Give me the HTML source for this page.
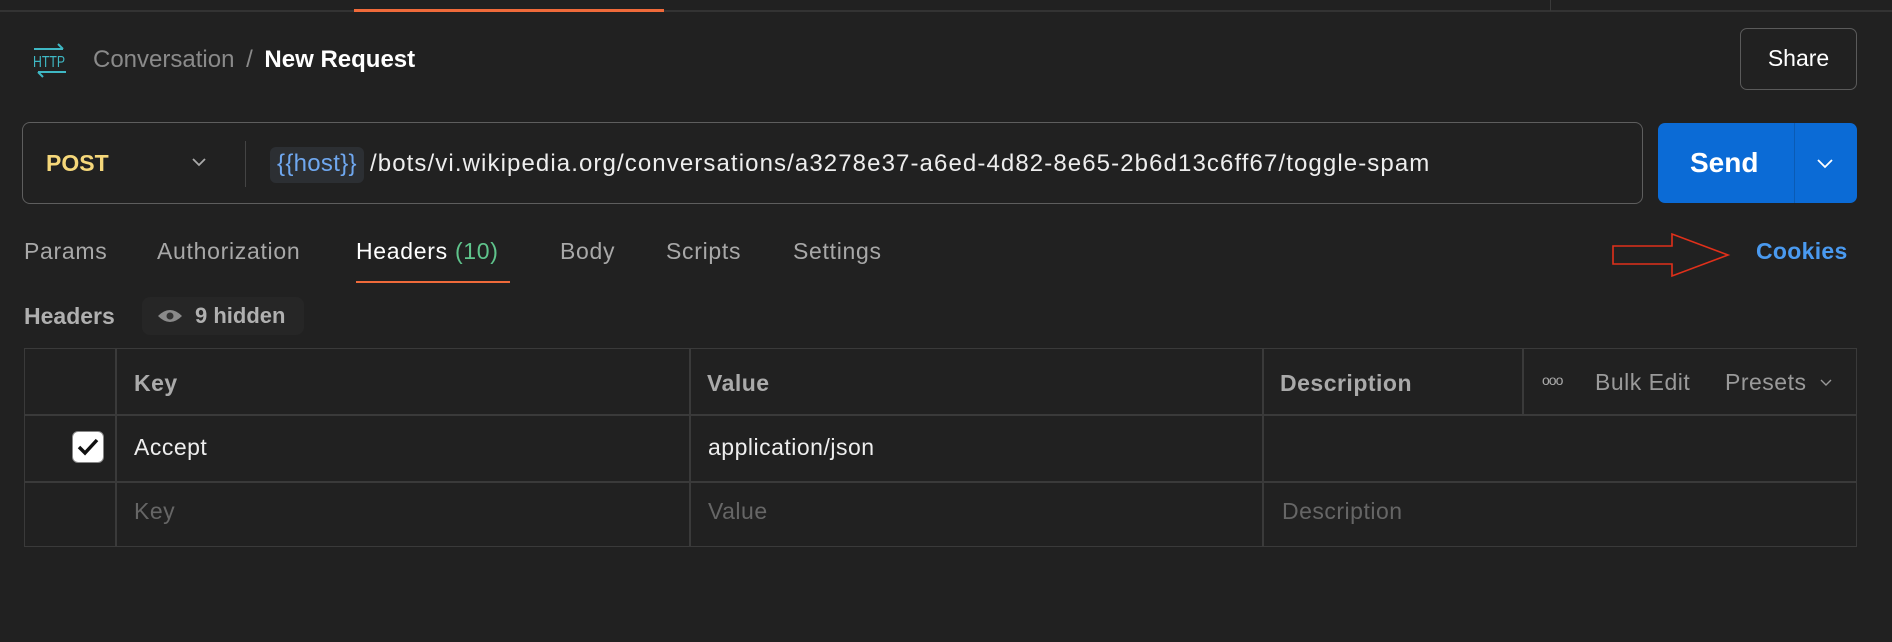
<!DOCTYPE html>
<html><head><meta charset="utf-8"><style>
*{box-sizing:border-box;margin:0;padding:0}
body{width:1892px;height:642px;background:#212121;font-family:"Liberation Sans",sans-serif;color:#e8e8e8;position:relative;overflow:hidden}
.a{position:absolute;white-space:nowrap}
.tab{position:absolute;top:238px;font-size:23px;letter-spacing:0.7px;color:#a8a8a8}
.cell{position:absolute;font-size:23px;letter-spacing:0.5px}
</style></head><body>
<div class="a" style="left:0;top:10px;width:1892px;height:2px;background:#333"></div>
<div class="a" style="left:354px;top:9px;width:310px;height:3px;background:#f06a3a"></div>
<div class="a" style="left:1550px;top:0;width:1px;height:11px;background:#3a3a3a"></div>

<svg class="a" style="left:31px;top:43px" width="38" height="36" viewBox="0 0 38 36">
<path d="M3 6 H32 M27 1 L32 6" stroke="#3fb8c4" stroke-width="2" fill="none"/>
<text x="2" y="24" font-family="Liberation Sans" font-size="16" fill="#3fb8c4" textLength="32" lengthAdjust="spacingAndGlyphs">HTTP</text>
<path d="M35 29 H7 M12 34 L7 29" stroke="#3fb8c4" stroke-width="2" fill="none"/>
</svg>
<div class="a" style="left:93px;top:46px;font-size:24px;letter-spacing:0px;color:#8a8a8a">Conversation <span style="margin:0 5px">/</span> <span style="color:#fff;font-weight:bold">New Request</span></div>

<div class="a" style="left:1740px;top:28px;width:117px;height:62px;border:1.5px solid #5a5a5a;border-radius:7px;font-size:23px;color:#fff;text-align:center;line-height:59px">Share</div>

<div class="a" style="left:22px;top:122px;width:1621px;height:82px;border:1.5px solid #5e5e5e;border-radius:8px"></div>
<div class="a" style="left:46px;top:150px;font-size:23px;font-weight:bold;color:#f5d77a">POST</div>
<svg class="a" style="left:191px;top:157px" width="16" height="10"><path d="M2 2 L8 8 L14 2" stroke="#aaa" stroke-width="1.8" fill="none"/></svg>
<div class="a" style="left:245px;top:141px;width:1px;height:46px;background:#444"></div>
<div class="a" style="left:270px;top:147px;width:94px;height:36px;background:#2c2f33;border-radius:6px"></div>
<div class="a" style="left:277px;top:150px;font-size:24px;letter-spacing:0.3px;color:#6fa7ef">{{host}}</div>
<div class="a" style="left:370px;top:150px;font-size:24px;letter-spacing:1.1px;color:#eee">/bots/vi.wikipedia.org/conversations/a3278e37-a6ed-4d82-8e65-2b6d13c6ff67/toggle-spam</div>

<div class="a" style="left:1658px;top:123px;width:199px;height:80px;background:#0b6bd6;border-radius:7px"></div>
<div class="a" style="left:1794px;top:123px;width:1px;height:80px;background:#0a5bb5"></div>
<div class="a" style="left:1690px;top:147px;font-size:28px;font-weight:bold;color:#fff">Send</div>
<svg class="a" style="left:1816px;top:158px" width="18" height="11"><path d="M2 2 L9 9 L16 2" stroke="#fff" stroke-width="1.8" fill="none"/></svg>

<div class="tab" style="left:24px">Params</div>
<div class="tab" style="left:157px">Authorization</div>
<div class="tab" style="left:356px;color:#fff">Headers <span style="color:#5fc48c">(10)</span></div>
<div class="tab" style="left:560px">Body</div>
<div class="tab" style="left:666px">Scripts</div>
<div class="tab" style="left:793px">Settings</div>
<div class="a" style="left:356px;top:281px;width:154px;height:2px;background:#f06a3a"></div>

<svg class="a" style="left:1612px;top:232px" width="120" height="46"><path d="M1 14 H60 V2 L116 23 L60 44 V32 H1 Z" stroke="#e0301a" stroke-width="1.6" fill="none"/></svg>
<div class="a" style="left:1756px;top:238px;font-size:23px;letter-spacing:0.3px;font-weight:bold;color:#4a9af0">Cookies</div>

<div class="a" style="left:24px;top:303px;font-size:23px;font-weight:bold;color:#b0b0b0">Headers</div>
<div class="a" style="left:142px;top:297px;width:162px;height:38px;background:#262626;border-radius:8px"></div>
<svg class="a" style="left:156px;top:307px" width="28" height="18"><path d="M2 9 Q14 -3 26 9 Q14 21 2 9 Z" fill="#8a8a8a"/><circle cx="14" cy="9" r="3.5" fill="#333"/></svg>
<div class="a" style="left:195px;top:303px;font-size:22px;font-weight:bold;color:#b0b0b0">9 hidden</div>

<div class="a" style="left:24px;top:348px;width:1833px;height:199px;border:1.5px solid #3a3a3a"></div>
<div class="a" style="left:24px;top:414px;width:1833px;height:1.5px;background:#3a3a3a"></div>
<div class="a" style="left:24px;top:481px;width:1833px;height:1.5px;background:#3a3a3a"></div>
<div class="a" style="left:115px;top:348px;width:1.5px;height:199px;background:#3a3a3a"></div>
<div class="a" style="left:689px;top:348px;width:1.5px;height:199px;background:#3a3a3a"></div>
<div class="a" style="left:1262px;top:348px;width:1.5px;height:199px;background:#3a3a3a"></div>
<div class="a" style="left:1522px;top:348px;width:1.5px;height:66px;background:#3a3a3a"></div>

<div class="cell a" style="left:134px;top:370px;font-weight:bold;color:#aaa">Key</div>
<div class="cell a" style="left:707px;top:370px;font-weight:bold;color:#aaa">Value</div>
<div class="cell a" style="left:1280px;top:370px;font-weight:bold;color:#aaa">Description</div>
<div class="a" style="left:1542px;top:372px;font-size:14px;color:#aaa;letter-spacing:-1px">ooo</div>
<div class="cell a" style="left:1595px;top:369px;color:#9a9a9a">Bulk Edit</div>
<div class="cell a" style="left:1725px;top:369px;color:#9a9a9a">Presets</div>
<svg class="a" style="left:1820px;top:379px" width="12" height="8"><path d="M1 1 L6 6 L11 1" stroke="#999" stroke-width="1.4" fill="none"/></svg>

<div class="a" style="left:72px;top:431px;width:32px;height:32px;background:#fff;border-radius:6px;border:1.5px solid #888"></div>
<svg class="a" style="left:77px;top:437px" width="22" height="20"><path d="M2 10 L8 16 L20 3" stroke="#111" stroke-width="3.5" fill="none"/></svg>
<div class="cell a" style="left:134px;top:434px;color:#eee">Accept</div>
<div class="cell a" style="left:708px;top:434px;color:#eee">application/json</div>
<div class="cell a" style="left:134px;top:498px;color:#666">Key</div>
<div class="cell a" style="left:708px;top:498px;color:#666">Value</div>
<div class="cell a" style="left:1282px;top:498px;color:#666">Description</div>
</body></html>
